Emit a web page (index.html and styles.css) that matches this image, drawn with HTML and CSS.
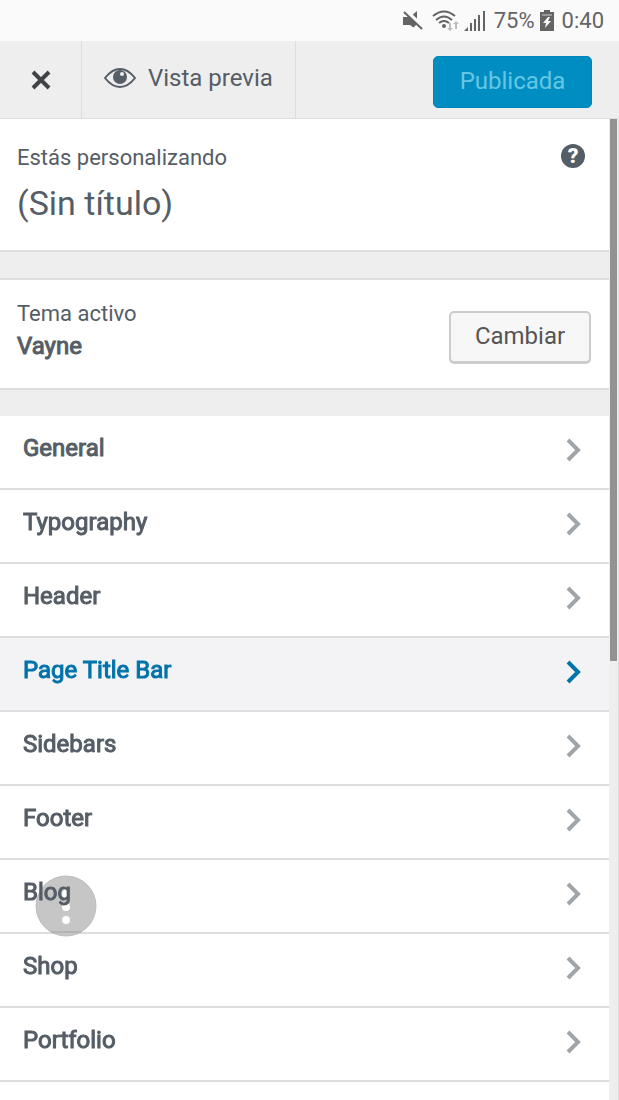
FILE: index.html
```html
<!DOCTYPE html>
<html lang="es">
<head>
  <meta charset="UTF-8">
  <meta name="viewport" content="width=device-width, initial-scale=1.0">
  <title>Personalizar</title>
  <link rel="stylesheet" href="styles.css">
</head>
<body>
  <div class="status-bar">
    <svg class="icon-mute" width="20" height="22" viewBox="0 0 20 22">
      <path d="M0 7h7l7-6v19l-7-5H0z" fill="#646464"/>
      <path d="M3 1l17 16" stroke="#fafafa" stroke-width="4"/>
      <path d="M14 14l1 7-5-3z" fill="#fafafa"/>
      <path d="M1 2l18 17" stroke="#646464" stroke-width="2"/>
    </svg>
    <svg class="icon-wifi" width="28" height="22" viewBox="0 0 28 22">
      <g fill="none" stroke="#646464" stroke-width="2">
        <path d="M1 6Q12-3 23 6"/>
        <path d="M4 10Q12 3 20 10"/>
        <path d="M7 13Q12 9 17 13"/>
      </g>
      <circle cx="12" cy="16" r="2" fill="#646464"/>
      <path d="M17 13v5h-2l3 3 3-3h-2v-5zM23 19v-5h-2l3-3 3 3h-2v5z" fill="#bdbdbd"/>
    </svg>
    <svg class="icon-signal" width="22" height="22" viewBox="0 0 22 22">
      <path d="M0 21l4-4v4zM6 13h2v8H6zM10 9h2v12h-2zM14 5h2v16h-2zM19 1h2v20h-2z" fill="#646464"/>
    </svg>
    <span class="battery-text">75%</span>
    <svg class="icon-battery" width="14" height="22" viewBox="0 0 14 22">
      <path d="M4 0h6v2h4v19H0V2h4z" fill="#646464"/>
      <path d="M2 4h10v2H2z" fill="#999"/>
      <path d="M8 7l-5 6h3l-1 5 6-7H8l2-4z" fill="#fafafa"/>
    </svg>
    <span class="clock">0:40</span>
  </div>

  <header class="header">
    <button class="close" aria-label="Cerrar">
      <svg width="20" height="20" viewBox="0 0 20 20">
        <path d="M2 2l16 16M18 2L2 18" stroke="#404244" stroke-width="4"/>
      </svg>
    </button>
    <button class="preview">
      <svg width="32" height="20" viewBox="0 0 32 20">
        <path d="M1 10Q8 1 16 1T31 10Q24 19 16 19T1 10z" fill="none" stroke="#555d66" stroke-width="2"/>
        <circle cx="16" cy="9" r="7" fill="#555d66"/>
        <circle cx="18" cy="6" r="2" fill="#eee"/>
      </svg>
      <span>Vista previa</span>
    </button>
    <button class="publish" disabled>Publicada</button>
  </header>

  <div class="content">
    <main class="panel">
      <section class="info">
        <div>
          <p class="small">Estás personalizando</p>
          <h1>(Sin título)</h1>
        </div>
        <button class="help" aria-label="Ayuda">?</button>
      </section>

      <section class="theme">
        <div>
          <p class="small">Tema activo</p>
          <h2>Vayne</h2>
        </div>
        <button class="change">Cambiar</button>
      </section>

      <ul class="sections">
        <li><a href="#"><span>General</span><svg class="arrow" viewBox="0 0 16 24"><path d="M2 2l10 10L2 22"/></svg></a></li>
        <li><a href="#"><span>Typography</span><svg class="arrow" viewBox="0 0 16 24"><path d="M2 2l10 10L2 22"/></svg></a></li>
        <li><a href="#"><span>Header</span><svg class="arrow" viewBox="0 0 16 24"><path d="M2 2l10 10L2 22"/></svg></a></li>
        <li><a href="#" class="active"><span>Page Title Bar</span><svg class="arrow" viewBox="0 0 16 24"><path d="M2 2l10 10L2 22"/></svg></a></li>
        <li><a href="#"><span>Sidebars</span><svg class="arrow" viewBox="0 0 16 24"><path d="M2 2l10 10L2 22"/></svg></a></li>
        <li><a href="#"><span>Footer</span><svg class="arrow" viewBox="0 0 16 24"><path d="M2 2l10 10L2 22"/></svg></a></li>
        <li><a href="#"><span>Blog</span><svg class="arrow" viewBox="0 0 16 24"><path d="M2 2l10 10L2 22"/></svg></a></li>
        <li><a href="#"><span>Shop</span><svg class="arrow" viewBox="0 0 16 24"><path d="M2 2l10 10L2 22"/></svg></a></li>
        <li><a href="#"><span>Portfolio</span><svg class="arrow" viewBox="0 0 16 24"><path d="M2 2l10 10L2 22"/></svg></a></li>
      </ul>
      <div class="rest"></div>
    </main>
    <div class="scrollbar"><div class="thumb"></div></div>
  </div>

  <!-- botón flotante del teléfono -->
  <button class="floating" aria-label="Menú">
    <svg width="62" height="62" viewBox="0 0 62 62">
      <circle cx="31" cy="31" r="30" fill="#c6c6c6" stroke="#bcbcbc" stroke-width="1"/>
      <g fill="#fff">
        <circle cx="31" cy="19" r="4"/>
        <circle cx="31" cy="32" r="4"/>
        <circle cx="31" cy="45" r="4"/>
      </g>
      <path d="M16 57h30" stroke="#b4b4b4" stroke-width="2"/>
    </svg>
  </button>
</body>
</html>
```

FILE: styles.css
```css
* {
  box-sizing: border-box;
}

body {
  margin: 0;
  min-height: 100vh;
  display: flex;
  flex-direction: column;
  font-family: Roboto, sans-serif;
  font-size: 24px;
  line-height: 32px;
  color: #555d66;
  background: #fff;
}

button {
  font: inherit;
  color: inherit;
  border: 0;
  padding: 0;
  background: none;
  cursor: pointer;
}

h1, h2, p, ul {
  margin: 0;
  padding: 0;
}

svg {
  display: block;
}

/* barra de estado */
.status-bar {
  display: flex;
  justify-content: flex-end;
  align-items: center;
  height: 41px;
  padding: 0 15px;
  background: #fafafa;
  color: #646464;
  font-size: 22px;
}

.icon-wifi {
  margin-left: 9px;
}

.icon-signal {
  margin-left: 4px;
}

.battery-text {
  margin: 0 5px 0 8px;
}

.clock {
  margin-left: 8px;
}

/* cabecera */
.header {
  display: flex;
  align-items: center;
  height: 78px;
  background: #eee;
  border-bottom: 1px solid #ddd;
}

.close,
.preview {
  display: flex;
  align-items: center;
  height: 100%;
  border-right: 1px solid #ddd;
}

.close {
  justify-content: center;
  width: 82px;
}

.preview {
  gap: 12px;
  padding: 0 22px 4px;
}

.publish,
.change {
  height: 52px;
  margin-left: auto;
  border-radius: 5px;
}

.publish {
  width: 159px;
  margin-top: 5px;
  margin-right: 27px;
  padding-bottom: 2px;
  background: #008ec2;
  border: 1px solid #0086b8;
  color: #66c6e4;
}

/* contenido */
.content {
  display: flex;
  flex: 1;
}

.panel {
  display: flex;
  flex: 1;
  flex-direction: column;
  background: #eee;
}

.info,
.theme {
  display: flex;
  justify-content: space-between;
  align-items: flex-start;
  background: #fff;
  border-bottom: 2px solid #ddd;
}

.info {
  padding: 23px 24px 25px 17px;
}

.small {
  font-size: 22px;
}

h1 {
  padding-top: 7px;
  font-size: 34px;
  font-weight: 400;
  line-height: 44px;
}

.help {
  width: 24px;
  height: 24px;
  margin-top: 2px;
  border-radius: 50%;
  background: #555d66;
  color: #fff;
  font-size: 21px;
  font-weight: 900;
  line-height: 24px;
}

.theme {
  margin-top: 26px;
  padding: 18px 18px 25px 17px;
  border-top: 2px solid #ddd;
}

h2 {
  font-size: 24px;
  font-weight: 400;
  line-height: 32px;
}

/* negrita simulada, como la del móvil */
h2,
.sections span {
  -webkit-text-stroke: 1px currentColor;
}

.change {
  width: 142px;
  margin-top: 13px;
  padding-bottom: 2px;
  background: #f7f7f7;
  border: 2px solid #ccc;
  box-shadow: 0 1px 0 #ccc;
  color: #555;
}

.sections {
  margin-top: 26px;
  list-style: none;
}

.sections a {
  display: flex;
  justify-content: space-between;
  align-items: center;
  height: 74px;
  padding: 0 27px 4px 23px;
  background: #fff;
  border-bottom: 2px solid #ddd;
  color: #555d66;
  text-decoration: none;
}

.sections span {
  position: relative;
  z-index: 2;
  padding-bottom: 4px;
}

.sections .active {
  background: #f3f3f5;
  color: #0073aa;
}

.arrow {
  width: 16px;
  height: 24px;
  fill: none;
  stroke: #a0a5aa;
  stroke-width: 4;
}

.active .arrow {
  stroke: #0073aa;
}

.rest {
  flex: 1;
  background: #fff;
}

.scrollbar {
  width: 10px;
  padding: 0 1px;
  background: #eee;
  border-right: 1px solid #ddd;
}

.thumb {
  height: 542px;
  background: #929292;
}

.floating {
  position: fixed;
  left: 35px;
  top: 875px;
  z-index: 1;
}
```
